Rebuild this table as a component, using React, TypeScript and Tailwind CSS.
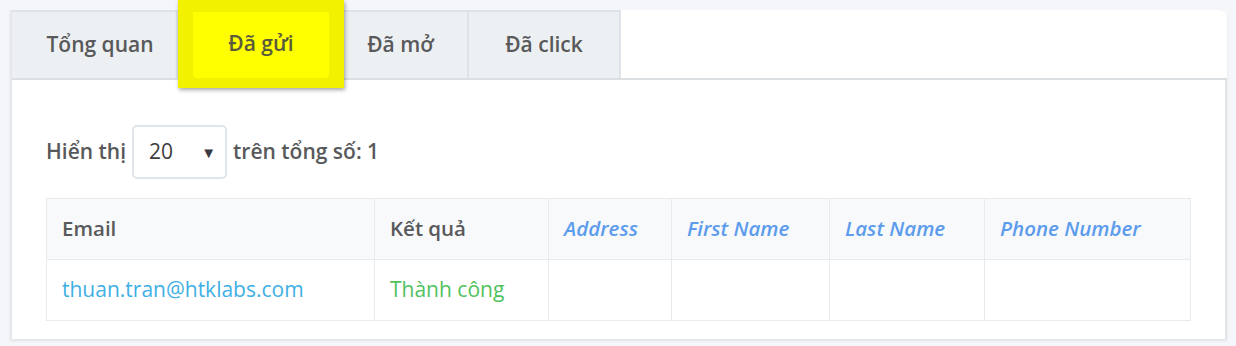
import React from 'react';

const tabs = [
    { label: 'Tổng quan', width: 'w-[166px] pl-[12px]' },
    { label: 'Đã gửi', width: 'w-[166px]', active: true },
    { label: 'Đã mở', width: 'w-[125px] pr-[10px]' },
    { label: 'Đã click', width: 'w-[152px]' },
];

const columns = [
    { label: 'Email', width: 'w-[328px]' },
    { label: 'Kết quả', width: 'w-[174px]' },
    { label: 'Address', width: 'w-[123px]', custom: true },
    { label: 'First Name', width: 'w-[158px]', custom: true },
    { label: 'Last Name', width: 'w-[155px]', custom: true },
    { label: 'Phone Number', width: 'w-[206px]', custom: true },
];

const App: React.FC = () => {
    return (
        <div className="min-h-[346px] bg-[#f4f6fa] pt-[10px] pl-[10px] pr-[9px] font-['Open_Sans',sans-serif] text-[#58595b]">
            <div className="bg-white rounded-tr-[8px] shadow-[0_2px_3px_rgba(0,0,0,0.08)] border-l-2 border-[#e4e8ec]">
                {/* tab bar */}
                <div className="flex h-[70px] border-b-2 border-[#dcdfe2]">
                    {tabs.map((tab) =>
                        tab.active ? (
                            <div key={tab.label} className={`relative ${tab.width}`}>
                                <div className="absolute left-0 right-0 -top-[10px] -bottom-[10px] bg-[#f2f200] shadow-[1px_2px_4px_rgba(0,0,0,0.35)]">
                                    <div className="absolute left-[15px] right-[15px] top-[12px] bottom-[10px] bg-[#ffff00] rounded-b-[4px]" />
                                </div>
                                <div className="relative flex h-full items-center justify-center text-[21px] font-semibold text-[#5a5a3c] pb-[1px]">
                                    {tab.label}
                                </div>
                            </div>
                        ) : (
                            <div
                                key={tab.label}
                                className={`${tab.width} flex items-center justify-center bg-[#edf0f2] border-t-2 border-r-2 border-[#dde3e8] text-[21px] font-semibold text-[#58595b]`}
                            >
                                {tab.label}
                            </div>
                        )
                    )}
                    <div className="flex-1" />
                </div>

                <div className="border-r-2 border-[#e1e6e9] pl-[34px] pr-[35px] pt-[45px] pb-[18px]">
                    {/* page size */}
                    <div className="flex items-center gap-[6px] text-[21px] font-semibold">
                        <span>Hiển thị</span>
                        <div className="flex h-[54px] w-[95px] items-center justify-between rounded-[5px] border-2 border-[#dfe5ea] pl-[15px] pr-[9px] font-normal text-[#3c3c3c]">
                            <span>20</span>
                            <span className="text-[15px] text-[#3a3a45]">▼</span>
                        </div>
                        <span>trên tổng số: 1</span>
                    </div>

                    {/* result table */}
                    <table className="mt-[19px] w-[1144px] table-fixed border-collapse text-[21px]">
                        <thead>
                            <tr className="h-[61px] bg-[#f8f9fb]">
                                {columns.map((col) => (
                                    <th
                                        key={col.label}
                                        className={`${col.width} border border-[#e8ebee] px-[15px] pb-[1px] text-left text-[20.5px] font-semibold ${
                                            col.custom ? 'italic text-[#5d9cec]' : 'text-[#58595b]'
                                        }`}
                                    >
                                        {col.label}
                                    </th>
                                ))}
                            </tr>
                        </thead>
                        <tbody>
                            <tr className="h-[61px]">
                                <td className="border border-[#e8ebee] px-[15px] text-[#3fb0e4]">thuan.tran@htklabs.com</td>
                                <td className="border border-[#e8ebee] px-[15px] text-[#4fc25e]">Thành công</td>
                                <td className="border border-[#e8ebee]" />
                                <td className="border border-[#e8ebee]" />
                                <td className="border border-[#e8ebee]" />
                                <td className="border border-[#e8ebee]" />
                            </tr>
                        </tbody>
                    </table>
                </div>
            </div>
        </div>
    );
};

export default App;
